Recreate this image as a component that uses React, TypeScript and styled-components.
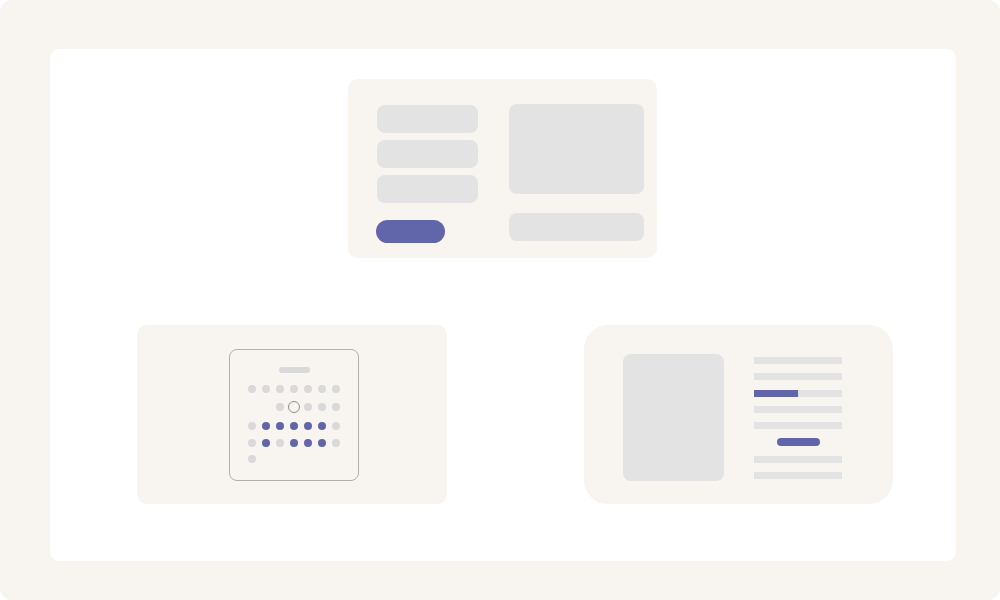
import styled, { createGlobalStyle } from "styled-components";

const GlobalStyle = createGlobalStyle`
  html, body {
    margin: 0;
    padding: 0;
    background: #ffffff;
    font-family: "Liberation Sans", Arial, sans-serif;
  }
`;

const CREAM = "#f8f5f1";
const GREY = "#e3e3e3";
const DOT = "#d9d9d9";
const PURPLE = "#6165a9";

// 0 = empty, 1 = grey dot, 2 = purple dot, 3 = ring (today)
const calendar: number[][] = [
  [1, 1, 1, 1, 1, 1, 1],
  [0, 0, 1, 3, 1, 1, 1],
  [1, 2, 2, 2, 2, 2, 1],
  [1, 2, 1, 2, 2, 2, 1],
  [1, 0, 0, 0, 0, 0, 0],
];

function App() {
  return (
    <>
      <GlobalStyle />
      <Frame>
        <Canvas>
          <TopRow>
            <FormCard>
              <FieldColumn>
                <Field />
                <Field />
                <Field />
                <PrimaryButton />
              </FieldColumn>
              <PreviewColumn>
                <Preview />
                <Field $wide />
              </PreviewColumn>
            </FormCard>
          </TopRow>
          <BottomRow>
            <CalendarCard>
              <CalendarFrame>
                <MonthBar />
                <DayGrid>
                  {calendar.flatMap((row, r) =>
                    row.map((kind, c) => (
                      <DayCell key={`${r}-${c}`}>
                        {kind === 3 ? <Ring /> : kind ? <Dot $active={kind === 2} /> : null}
                      </DayCell>
                    ))
                  )}
                </DayGrid>
              </CalendarFrame>
            </CalendarCard>
            <ArticleCard>
              <Thumb />
              <Lines>
                <Line />
                <Line />
                <Line>
                  <Progress style={{ width: "50%" }} />
                </Line>
                <Line />
                <Line />
                <SmallButton />
                <Line />
                <Line />
              </Lines>
            </ArticleCard>
          </BottomRow>
        </Canvas>
      </Frame>
    </>
  );
}

const Frame = styled.div`
  width: 1000px;
  height: 600px;
  box-sizing: border-box;
  background: ${CREAM};
  border-radius: 12px;
  padding: 49px 44px 39px 50px;
  overflow: hidden;
`;

const Canvas = styled.div`
  width: 906px;
  height: 512px;
  background: #ffffff;
  border-radius: 9px;
  box-sizing: border-box;
  padding-top: 30px;
  display: flex;
  flex-direction: column;
`;

const TopRow = styled.div`
  display: flex;
  padding-left: 298px;
`;

const Card = styled.div`
  width: 309px;
  height: 179px;
  box-sizing: border-box;
  background: ${CREAM};
  border-radius: 10px;
`;

const FormCard = styled(Card)`
  display: flex;
  gap: 31px;
  padding: 26px 13px 0 29px;
`;

const FieldColumn = styled.div`
  display: flex;
  flex-direction: column;
  gap: 7px;
  width: 101px;
`;

const Field = styled.div<{ $wide?: boolean }>`
  width: ${(p) => (p.$wide ? "135px" : "101px")};
  height: 28px;
  border-radius: 8px;
  background: ${GREY};
`;

const PrimaryButton = styled.div`
  width: 69px;
  height: 23px;
  margin-top: 10px;
  margin-left: -1px;
  border-radius: 12px;
  background: ${PURPLE};
`;

const PreviewColumn = styled.div`
  display: flex;
  flex-direction: column;
  gap: 19px;
  margin-top: -1px;
`;

const Preview = styled.div`
  width: 135px;
  height: 90px;
  border-radius: 8px;
  background: ${GREY};
`;

const BottomRow = styled.div`
  display: flex;
  gap: 137px;
  padding-left: 87px;
  margin-top: 67px;
`;

const CalendarCard = styled(Card)`
  width: 310px;
  display: flex;
  align-items: center;
  justify-content: center;
  padding-left: 3px;
`;

const CalendarFrame = styled.div`
  width: 130px;
  height: 132px;
  box-sizing: border-box;
  border: 1px solid #b3aeab;
  border-radius: 8px;
  padding: 17px 0 0 18px;
  display: flex;
  flex-direction: column;
`;

const MonthBar = styled.div`
  width: 31px;
  height: 6px;
  border-radius: 3px;
  background: ${DOT};
  align-self: flex-start;
  margin-left: 31px;
  margin-bottom: 12px;
`;

const DayGrid = styled.div`
  display: grid;
  grid-template-columns: repeat(7, 8px);
  column-gap: 6px;
  row-gap: 8.7px;
  align-items: center;
`;

const DayCell = styled.div`
  width: 8px;
  min-height: 8px;
  display: flex;
  align-items: center;
  justify-content: center;
  overflow: visible;
`;

const Dot = styled.div<{ $active?: boolean }>`
  flex: none;
  width: 8px;
  height: 8px;
  border-radius: 50%;
  background: ${(p) => (p.$active ? PURPLE : DOT)};
`;

const Ring = styled.div`
  flex: none;
  width: 12px;
  height: 12px;
  box-sizing: border-box;
  border-radius: 50%;
  border: 1.5px solid #8e8b89;
`;

const ArticleCard = styled(Card)`
  border-radius: 24px;
  display: flex;
  gap: 30px;
  padding: 29px 0 0 39px;
`;

const Thumb = styled.div`
  width: 101px;
  height: 127px;
  border-radius: 8px;
  background: ${GREY};
`;

const Lines = styled.div`
  display: flex;
  flex-direction: column;
  align-items: center;
  gap: 9.3px;
  width: 88px;
  padding-top: 3px;
`;

const Line = styled.div`
  width: 88px;
  height: 7px;
  background: ${GREY};
  display: flex;
`;

const Progress = styled.div`
  height: 100%;
  background: ${PURPLE};
`;

const SmallButton = styled.div`
  width: 43px;
  height: 8px;
  border-radius: 4px;
  background: ${PURPLE};
`;

export default App;
